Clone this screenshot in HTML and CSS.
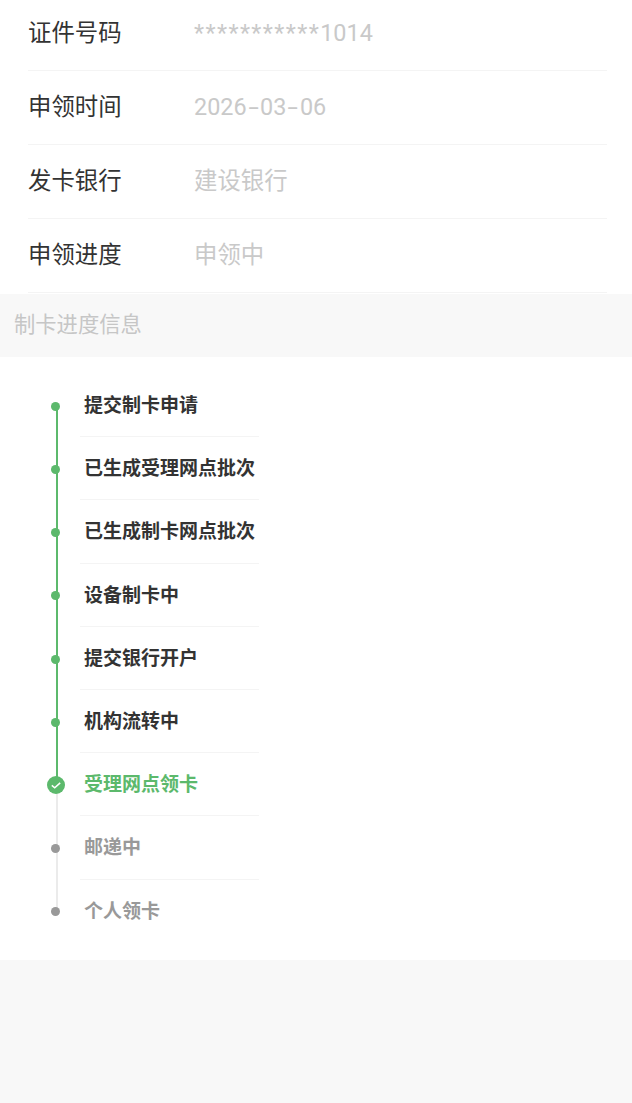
FILE: index.html
```html
<!DOCTYPE html>
<html lang="zh-CN">
<head>
    <meta charset="UTF-8">
    <meta name="viewport" content="width=device-width, initial-scale=1.0">
    <title>制卡进度</title>
    <link rel="stylesheet" href="styles.css">
</head>
<body>
    <div class="info-list">
        <div class="info-row first">
            <span class="info-label">证件号码</span>
            <span class="info-value"><span class="stars">***********</span>1014</span>
        </div>
        <div class="info-row">
            <span class="info-label">申领时间</span>
            <span class="info-value">2026<span class="dash">-</span>03<span class="dash">-</span>06</span>
        </div>
        <div class="info-row">
            <span class="info-label">发卡银行</span>
            <span class="info-value">建设银行</span>
        </div>
        <div class="info-row">
            <span class="info-label">申领进度</span>
            <span class="info-value">申领中</span>
        </div>
    </div>

    <div class="section-title">制卡进度信息</div>

    <div class="steps">
        <div class="step done">
            <div class="step-rail"><span class="step-dot"></span></div>
            <div class="step-text">提交制卡申请</div>
        </div>
        <div class="step done">
            <div class="step-rail"><span class="step-dot"></span></div>
            <div class="step-text">已生成受理网点批次</div>
        </div>
        <div class="step done">
            <div class="step-rail"><span class="step-dot"></span></div>
            <div class="step-text">已生成制卡网点批次</div>
        </div>
        <div class="step done">
            <div class="step-rail"><span class="step-dot"></span></div>
            <div class="step-text">设备制卡中</div>
        </div>
        <div class="step done">
            <div class="step-rail"><span class="step-dot"></span></div>
            <div class="step-text">提交银行开户</div>
        </div>
        <div class="step done">
            <div class="step-rail"><span class="step-dot"></span></div>
            <div class="step-text">机构流转中</div>
        </div>
        <div class="step current">
            <div class="step-rail">
                <svg class="step-check" viewBox="0 0 18 18" width="18" height="18">
                    <circle cx="9" cy="9" r="9" fill="#5cb96c"/>
                    <path d="M4.8 9.4l2.9 2.4 5.5-4.9" fill="none" stroke="#fff" stroke-width="1.5"/>
                </svg>
            </div>
            <div class="step-text">受理网点领卡</div>
        </div>
        <div class="step todo">
            <div class="step-rail"><span class="step-dot"></span></div>
            <div class="step-text">邮递中</div>
        </div>
        <div class="step todo last">
            <div class="step-rail"><span class="step-dot"></span></div>
            <div class="step-text">个人领卡</div>
        </div>
    </div>
</body>
</html>
```

FILE: styles.css
```css
* {
    box-sizing: border-box;
    margin: 0;
    padding: 0;
}
html, body {
    height: 100%;
    overflow: hidden;
}
body {
    background-color: #f8f8f8;
    font-family: Roboto, "Noto Sans CJK SC", sans-serif;
}
/* Info rows at the top, the page is scrolled so the first one is cut */
.info-list {
    background-color: #fff;
    padding-left: 28px;
    padding-right: 25px;
    height: 294px;
}
.info-row {
    display: flex;
    align-items: baseline;
    height: 74px;
    padding-top: 19px;
    line-height: 34px;
    border-bottom: 1px solid #f4f4f4;
}
.info-row.first {
    height: 71px;
    padding-top: 16px;
}
.info-label {
    width: 166px;
    font-size: 23.4px;
    color: #333;
}
.info-value {
    font-size: 23.4px;
    color: #c9c9c9;
}
/* Roboto stars and hyphens are narrower than in the reference */
.stars {
    letter-spacing: 1.4px;
}
.dash {
    display: inline-block;
    width: 13.5px;
    text-align: center;
    transform: scaleX(1.6);
}
/* Section header */
.section-title {
    height: 63px;
    line-height: 62px;
    padding-left: 14px;
    font-size: 21.3px;
    color: #c6c6c6;
}
/* Timeline */
.steps {
    background-color: #fff;
    padding: 17px 0 17px;
    height: 603px;
}
.step {
    display: flex;
    height: 63.2px;
}
.step-rail {
    position: relative;
    width: 80px;
    flex-shrink: 0;
}
.step-rail::before {
    content: "";
    position: absolute;
    left: 56px;
    top: 32px;
    width: 2px;
    height: 63.2px;
    background-color: #5cb96c;
}
.step.current .step-rail::before,
.step.todo .step-rail::before {
    background-color: #ebebeb;
}
.step.last .step-rail::before {
    display: none;
}
.step-dot {
    position: absolute;
    left: 51px;
    top: 27.8px;
    width: 9px;
    height: 9px;
    border-radius: 50%;
    background-color: #5cb96c;
}
.step.todo .step-dot {
    background-color: #999;
}
.step-check {
    position: absolute;
    left: 47px;
    top: 23px;
}
.step-text {
    width: 179px;
    padding-left: 4px;
    padding-top: 2px;
    line-height: 60px;
    font-size: 19px;
    font-weight: bold;
    color: #333;
    border-bottom: 1px solid #f4f4f4;
}
.step.current .step-text {
    color: #5cb96c;
}
.step.todo .step-text {
    color: #999;
}
.step.last .step-text {
    border-bottom: none;
}
```
